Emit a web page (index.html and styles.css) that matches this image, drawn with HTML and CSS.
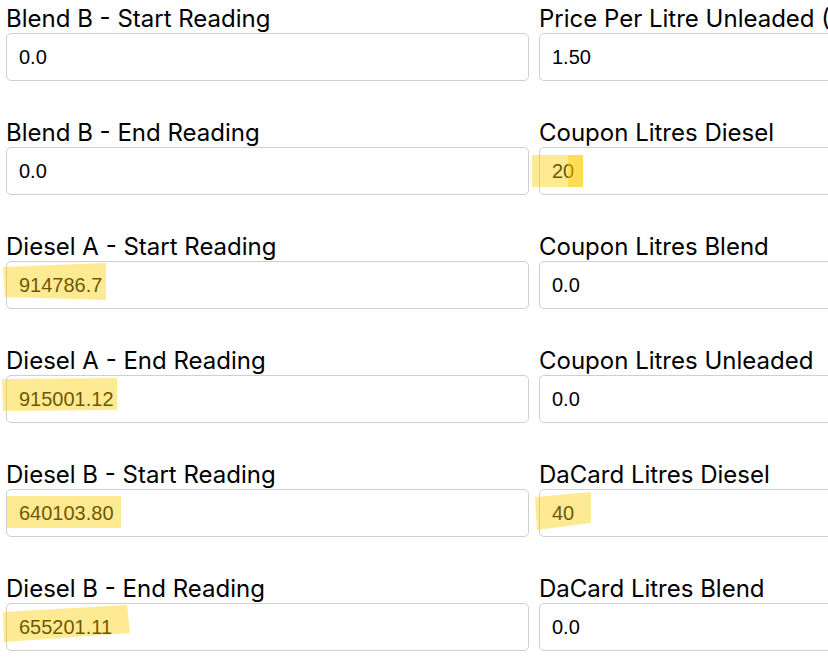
FILE: index.html
```html
<!DOCTYPE html>
<html lang="en">
<head>
<meta charset="utf-8">
<title>Fuel Readings</title>
<link rel="stylesheet" href="styles.css">
</head>
<body>
<form class="form">
  <div class="field"><label class="label">Blend B - Start Reading</label><input class="input" value="0.0"></div>
  <div class="field"><label class="label">Price Per Litre Unleaded ($)</label><input class="input" value="1.50"></div>
  <div class="field"><label class="label">Blend B - End Reading</label><input class="input" value="0.0"></div>
  <div class="field"><label class="label">Coupon Litres Diesel</label><input class="input" value="20"></div>
  <div class="field"><label class="label">Diesel A - Start Reading</label><input class="input" value="914786.7"></div>
  <div class="field"><label class="label">Coupon Litres Blend</label><input class="input" value="0.0"></div>
  <div class="field"><label class="label">Diesel A - End Reading</label><input class="input" value="915001.12"></div>
  <div class="field"><label class="label">Coupon Litres Unleaded</label><input class="input" value="0.0"></div>
  <div class="field"><label class="label">Diesel B - Start Reading</label><input class="input" value="640103.80"></div>
  <div class="field"><label class="label">DaCard Litres Diesel</label><input class="input" value="40"></div>
  <div class="field"><label class="label">Diesel B - End Reading</label><input class="input" value="655201.11"></div>
  <div class="field"><label class="label">DaCard Litres Blend</label><input class="input" value="0.0"></div>
</form>
<svg class="marks" width="828" height="663" viewBox="0 0 828 663" aria-hidden="true">
  <polygon points="532,155 583,155 583,187 532,187"/>
  <polygon points="568,155 583,155 583,187 568,187"/>
  <polygon points="3,267 106,263 106,300 5,297"/>
  <polygon points="2,379 117,378 117,410 3,411"/>
  <polygon points="7,496 121,496 121,528 7,528"/>
  <polygon points="535,497 591,492 591,523 537,530"/>
  <polygon points="3,612 127,605 130,633 4,642"/>
</svg>
</body>
</html>
```
FILE: styles.css
```css
html, body {
  margin: 0;
  padding: 0;
  background: #ffffff;
  overflow: hidden;
}
body {
  position: relative;
  width: 828px;
  height: 663px;
}
.form {
  display: grid;
  grid-template-columns: 523px 523px;
  column-gap: 10px;
  padding: 0 6px;
}
.field {
  display: flex;
  flex-direction: column;
  padding-top: 6px;
  padding-bottom: 33px;
}
.label {
  font-family: "Inter", "Liberation Sans", sans-serif;
  font-size: 24px;
  line-height: 26px;
  color: #000;
  margin-bottom: 1px;
  white-space: nowrap;
}
.input {
  box-sizing: border-box;
  height: 48px;
  width: 100%;
  margin: 0;
  border: 1px solid #cfcfcf;
  border-radius: 5px;
  padding: 0 12px;
  font-family: "Liberation Sans", Arial, sans-serif;
  font-size: 20px;
  color: #000;
  background: #fff;
  outline: none;
}
.marks {
  position: absolute;
  top: 0;
  left: 0;
  pointer-events: none;
}
.marks polygon {
  fill: rgba(255, 205, 0, 0.42);
}
```
